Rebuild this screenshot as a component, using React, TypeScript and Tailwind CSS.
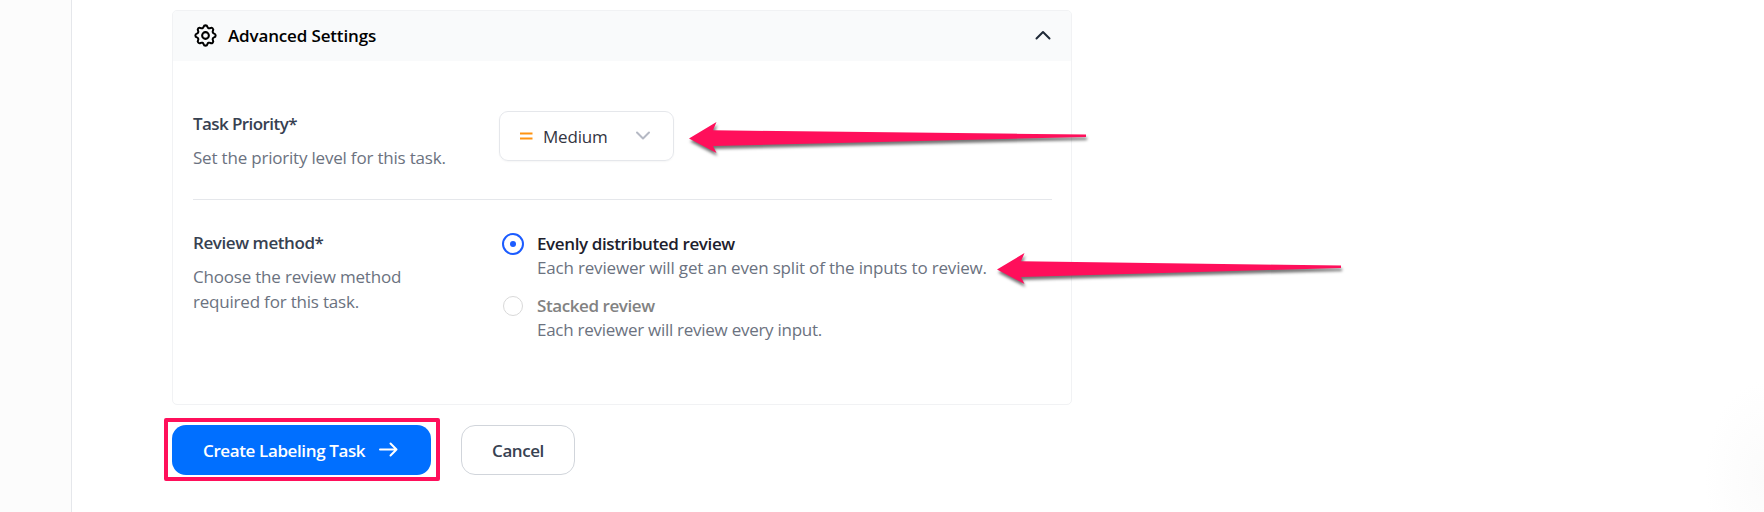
import { useState } from 'react';

function Gear() {
  return (
    <svg className="-ml-px -mt-0.5 size-[27px] shrink-0" viewBox="0 0 24 24" fill="none" stroke="currentColor" strokeWidth="1.800" strokeLinecap="round" strokeLinejoin="round">
      <path d="M10.325 4.317c.426-1.756 2.924-1.756 3.35 0a1.724 1.724 0 002.573 1.066c1.543-.94 3.31.826 2.37 2.37a1.724 1.724 0 001.065 2.572c1.756.426 1.756 2.924 0 3.35a1.724 1.724 0 00-1.066 2.573c.94 1.543-.826 3.31-2.37 2.37a1.724 1.724 0 00-2.572 1.065c-.426 1.756-2.924 1.756-3.35 0a1.724 1.724 0 00-2.573-1.066c-1.543.94-3.31-.826-2.37-2.37a1.724 1.724 0 00-1.065-2.572c-1.756-.426-1.756-2.924 0-3.35a1.724 1.724 0 001.066-2.573c-.94-1.543.826-3.31 2.37-2.37.996.608 2.296.07 2.572-1.065z" />
      <circle cx="12" cy="12" r="3" />
    </svg>
  );
}

function Arrow({ length }: { length: number }) {
  return (
    <svg className="overflow-visible drop-shadow-[1px_3px_1.5px_rgba(0,0,0,0.55)]" width={length} height="32" fill="#ff0f5b">
      <path d={`M0 16.500 L27.500 0 L24 8.300 L${length} 12.500 V15 L24 24 L27.500 31 Z`} />
    </svg>
  );
}

function Option({ title, text, checked, onSelect }: { title: string; text: string; checked: boolean; onSelect: () => void }) {
  return (
    <button type="button" onClick={onSelect} className="flex text-left">
      <span className="flex h-6 w-[35px] shrink-0 items-center">
        {checked ? (
          <span className="flex size-[22px] items-center justify-center rounded-full border-2 border-[#1c5cff]">
            <span className="size-1.5 rounded-full bg-[#1c5cff]" />
          </span>
        ) : (
          <span className="ml-px size-5 rounded-full border border-[#d9d9d9]" />
        )}
      </span>
      <span className="flex flex-col">
        <span className={checked ? 'h-6 font-semibold leading-6 tracking-[-0.38px] text-[#20202c]' : 'h-6 font-semibold leading-6 tracking-[-0.42px] text-[#828282]'}>{title}</span>
        <span className={checked ? 'h-6 leading-6 tracking-[-0.18px] text-[#6b7280]' : 'h-6 leading-6 tracking-[-0.27px] text-[#6b7280]'}>{text}</span>
      </span>
    </button>
  );
}

export default function App() {
  const [method, setMethod] = useState('even');
  return (
    <div className="relative flex h-[512px] w-full overflow-hidden bg-white font-['Open_Sans','Noto_Sans',sans-serif] text-[17px]">
      <aside className="w-[72px] shrink-0 border-r border-[#e5e7eb] bg-[#fcfcfc]" />
      <main className="flex flex-col pl-[100px] pt-2.5">
        <section className="flex h-[395px] w-[900px] flex-col overflow-hidden rounded-[5px] border border-[#f1f2f4]">
          <header className="flex h-[50px] shrink-0 items-center bg-[#f9fafb] pl-5 pr-[19px] text-black">
            <Gear />
            <h2 className="ml-[9px] flex-1 font-semibold tracking-[-0.15px]">Advanced Settings</h2>
            <svg className="-mt-0.5 h-6 w-[18px]" viewBox="0 0 18 24" fill="none" stroke="#1f2937" strokeWidth="2" strokeLinecap="round" strokeLinejoin="round"><path d="M2.5 15.5 9 9l6.5 6.5" /></svg>
          </header>
          <div className="ml-5 mr-[19px] flex h-[139px] shrink-0 border-b border-[#e5e7eb] pt-[50px]">
            <div className="w-[306px] pt-px">
              <h3 className="font-semibold leading-6 tracking-[-0.58px] text-[#374151]">Task Priority*</h3>
              <p className="mt-[9px] leading-[25px] tracking-[-0.2px] text-[#6b7280]">Set the priority level for this task.</p>
            </div>
            <button type="button" className="flex h-[50px] w-[175px] items-center rounded-[9px] border border-[#e5e7eb] pl-5 pr-[22px] text-[#333542] shadow-[0_1px_2px_rgba(0,0,0,0.04)]">
              <svg className="size-[13px]" viewBox="0 0 13 13" fill="none" stroke="#ff9412" strokeWidth="2.200"><path d="M0 3.500h12.500M0 8.500h12.500" /></svg>
              <span className="ml-2.5 flex-1 pt-px text-left tracking-[-0.2px]">Medium</span>
              <svg className="h-3 w-4" viewBox="0 0 16 12" fill="none" stroke="#b5b9c4" strokeWidth="2" strokeLinecap="round" strokeLinejoin="round"><path d="m2 2.500 6 6 6-6" /></svg>
            </button>
          </div>
          <div className="ml-5 flex pt-[31px]">
            <div className="w-[309px]">
              <h3 className="font-semibold leading-6 tracking-[-0.42px] text-[#374151]">Review method*</h3>
              <p className="mt-[9px] w-[240px] leading-[25px] tracking-[-0.2px] text-[#6b7280]">Choose the review method required for this task.</p>
            </div>
            <div className="flex flex-col gap-3.5 pt-px">
              <Option title="Evenly distributed review" text="Each reviewer will get an even split of the inputs to review." checked={method === 'even'} onSelect={() => setMethod('even')} />
              <Option title="Stacked review" text="Each reviewer will review every input." checked={method === 'stacked'} onSelect={() => setMethod('stacked')} />
            </div>
          </div>
        </section>
        <div className="-ml-2 mt-[13px] flex items-center gap-[21px]">
          <div className="h-[63px] w-[276px] rounded-[2px] border-4 border-[#ff0f5b] pl-1 pt-[3px]">
            <button type="button" className="flex h-[50px] w-[259px] items-center rounded-[14px] bg-[#006fff] pl-[31px] pt-0.5 font-semibold tracking-[-0.38px] text-white">
              Create Labeling Task
              <svg className="-mt-0.5 ml-3.5 h-4 w-[19px]" viewBox="0 0 19 16" fill="none" stroke="currentColor" strokeWidth="2" strokeLinecap="round" strokeLinejoin="round"><path d="M1 7.500h16.500M11.500 1.500l6 6-6 6" /></svg>
            </button>
          </div>
          <button type="button" className="h-[50px] w-[114px] rounded-[14px] border border-[#d1d5db] pt-0.5 font-semibold tracking-[-0.42px] text-[#374151]">Cancel</button>
        </div>
      </main>
      <div className="absolute left-[689px] top-[122px]"><Arrow length={397} /></div>
      <div className="absolute left-[997px] top-[253px]"><Arrow length={344} /></div>
      <div className="pointer-events-none absolute bottom-0 right-0 h-[132px] w-[60px] bg-[radial-gradient(ellipse_at_100%_75%,#fbfbfb,#ffffff_70%)]" />
    </div>
  );
}
